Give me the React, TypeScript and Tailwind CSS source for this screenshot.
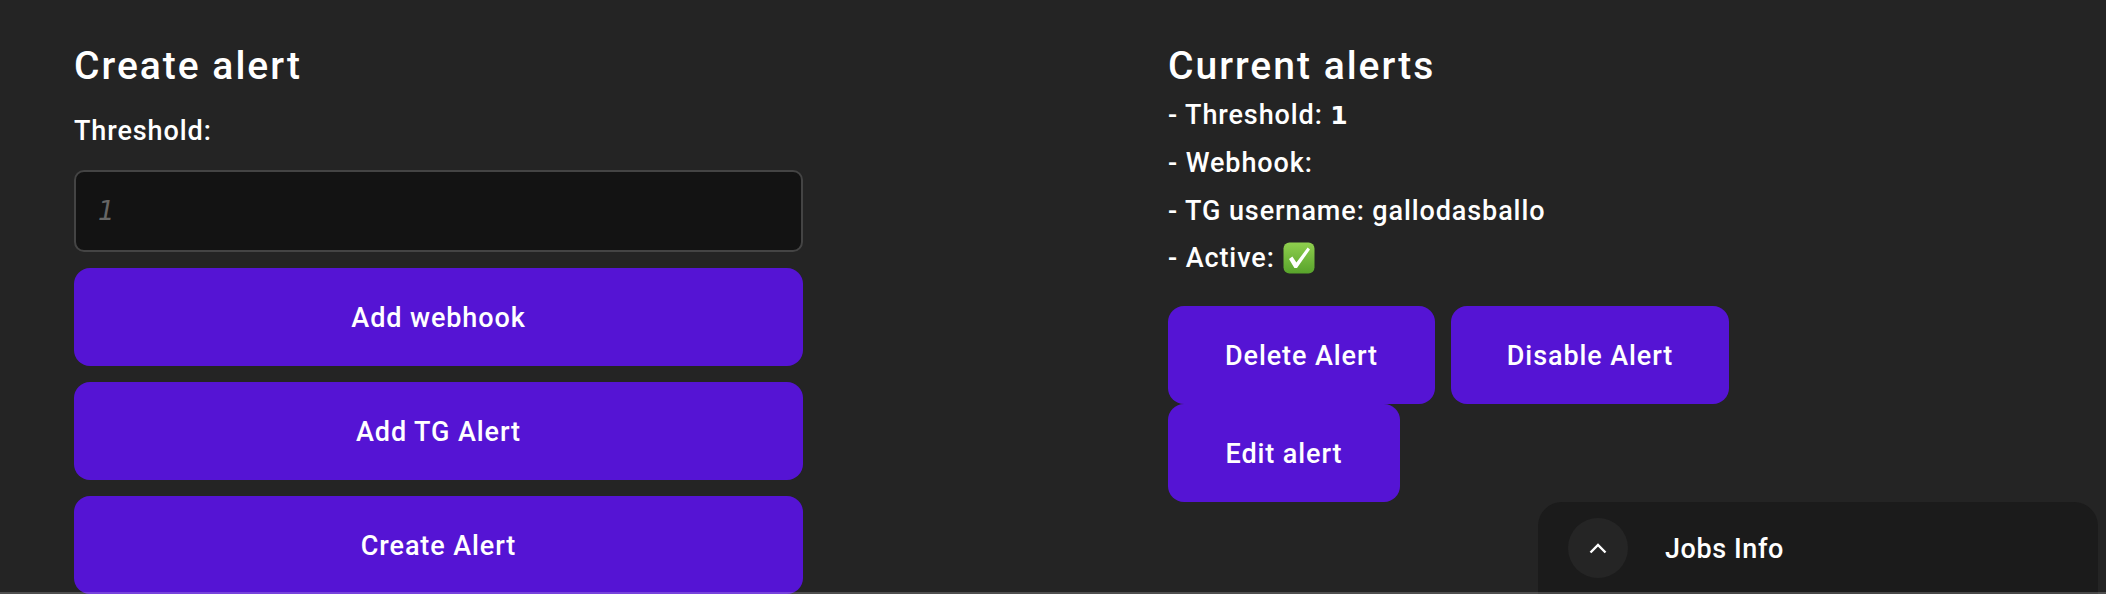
import React from 'react';

const font = "font-['Roboto','Liberation_Sans',sans-serif]";

const CheckEmoji: React.FC = () => (
  <svg width="32" height="32" viewBox="0 0 32 32" className="ml-[8px] -mt-[1px] shrink-0">
    <defs>
      <linearGradient id="box" x1="0" y1="0" x2="0" y2="1">
        <stop offset="0" stopColor="#8fcf4e" />
        <stop offset="1" stopColor="#58a32b" />
      </linearGradient>
    </defs>
    <rect x="0.5" y="0.5" width="31" height="31" rx="6" fill="url(#box)" />
    <path d="M6 17l3.4-2.4 4 6L24.6 5.5 27 7.4 14 26h-2.6z" fill="#fff" />
  </svg>
);

const One: React.FC = () => <span className="font-['DejaVu_Sans',sans-serif] text-[25px] font-bold">1</span>;

const PurpleButton: React.FC<{ label: string; className: string }> = ({ label, className }) => (
  <button className={`h-[98px] pt-[2px] bg-[#5514d4] rounded-[16px] text-white text-[27px] tracking-[0.9px] font-medium flex items-center justify-center ${className}`}>
    {label}
  </button>
);

const App: React.FC = () => {
  return (
    <div className={`relative h-[594px] w-full overflow-hidden bg-[#242424] text-white ${font}`}>
      <div className="grid grid-cols-[1094px_1fr] pl-[74px] pt-[40px]">
        <div className="w-[729px]">
          <h2 className="h-[50px] leading-[52px] text-[39px] font-medium tracking-[2px]">Create alert</h2>
          <div className="mt-4 h-12 leading-[50px] text-[27px] font-medium tracking-[0.9px]">Threshold:</div>
          <input
            placeholder="1"
            className="mt-4 block w-full h-[82px] px-[22px] bg-[#131313] border-2 border-[#444] rounded-[10px] text-[26px] font-['DejaVu_Sans',sans-serif] placeholder:italic placeholder:text-[#666] outline-none"
          />
          <div className="mt-4 flex flex-col gap-4">
            <PurpleButton label="Add webhook" className="w-full" />
            <PurpleButton label="Add TG Alert" className="w-full" />
            <PurpleButton label="Create Alert" className="w-full" />
          </div>
        </div>

        <div>
          <h2 className="h-[50px] leading-[52px] text-[39px] font-medium tracking-[2px]">Current alerts</h2>
          <div className="text-[27px] font-medium tracking-[0.9px] leading-[50px]">
            <div className="h-12">- Threshold: <One /></div>
            <div className="h-12">- Webhook:</div>
            <div className="h-12">- TG username: gallodasballo</div>
            <div className="h-12 flex items-center"><span>- Active:</span><CheckEmoji /></div>
          </div>
          <div className="mt-6 flex flex-wrap gap-x-4 w-[600px]">
            <PurpleButton label="Delete Alert" className="w-[267px]" />
            <PurpleButton label="Disable Alert" className="w-[278px]" />
            <PurpleButton label="Edit alert" className="w-[232px]" />
          </div>
        </div>
      </div>

      <div className="absolute bottom-0 right-2 w-[560px] h-[92px] bg-[#1b1b1b] rounded-t-[24px] flex items-center pl-[30px]">
        <div className="w-[60px] h-[60px] rounded-full bg-[#252525] flex items-center justify-center">
          <svg width="18" height="11" viewBox="0 0 18 11" fill="none" stroke="#fff" strokeWidth="2.4">
            <path d="M1.5 9.5L9 2l7.5 7.5" />
          </svg>
        </div>
        <span className="ml-[37px] pt-[2px] text-[27px] font-medium tracking-[0.6px]">Jobs Info</span>
      </div>

      <div className="absolute bottom-0 left-0 right-0 h-[2px] bg-white/20" />
    </div>
  );
};

export default App;
